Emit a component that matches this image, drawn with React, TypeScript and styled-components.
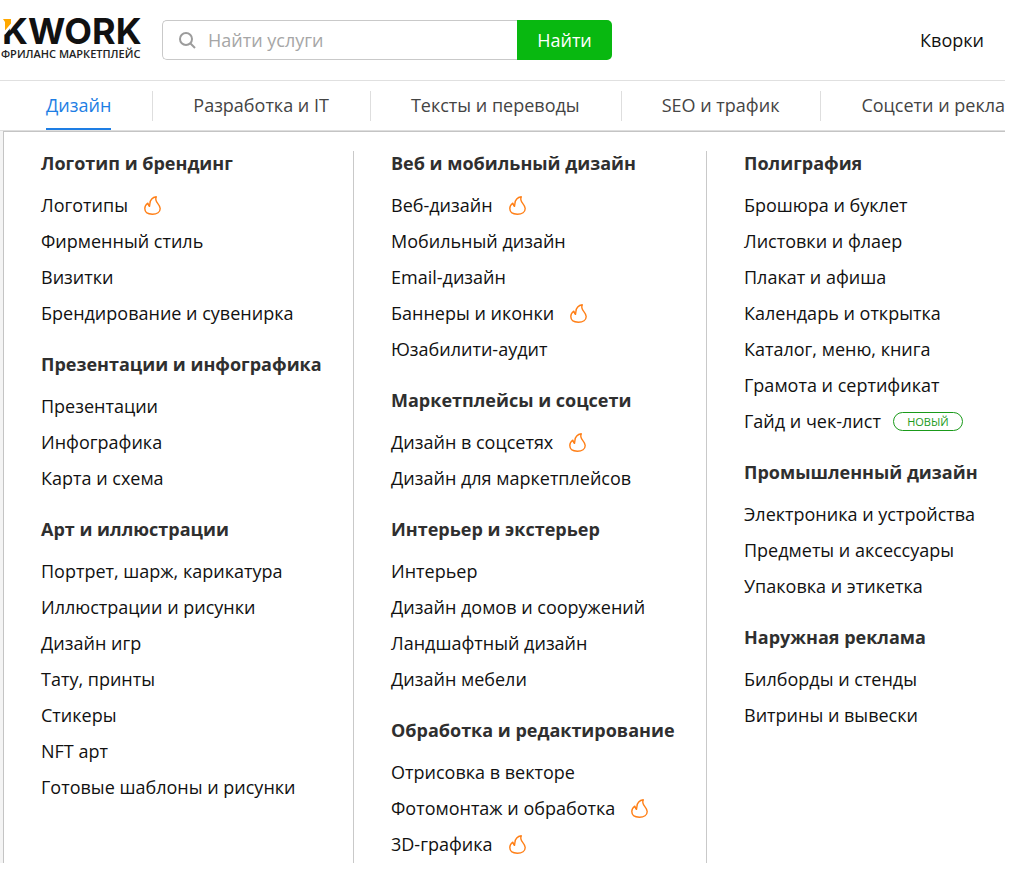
import React from "react";
import styled, { createGlobalStyle } from "styled-components";

const GlobalStyle = createGlobalStyle`
  *, *::before, *::after { box-sizing: border-box; }
  body {
    margin: 0;
    background: #fff;
    color: #111;
    font: 18px/24px "Open Sans", "Noto Sans", sans-serif;
  }
  a { color: inherit; text-decoration: none; }
  ul { list-style: none; margin: 0; padding: 0; }
`;

const Page = styled.div`
  margin-right: 5px;
  overflow: hidden;
`;

const Header = styled.header`
  display: flex;
  align-items: center;
  height: 81px;
  padding-right: 21px;
  border-bottom: 1px solid #e0e0e0;
`;

const LogoLink = styled.a`
  display: block;
  width: 162px;
  flex: none;
`;

const Wordmark = styled.svg`
  display: block;
  overflow: visible;
`;

const Tagline = styled.span`
  display: block;
  padding-left: 1px;
  font-size: 11px;
  font-weight: 600;
  line-height: 18px;
  white-space: nowrap;
  color: #222;
`;

const SearchForm = styled.form`
  display: flex;
  width: 450px;
  height: 40px;
`;

const SearchField = styled.label`
  display: flex;
  flex: 1;
  align-items: center;
  gap: 12px;
  min-width: 0;
  padding-left: 16px;
  border: 1px solid #c9c9c9;
  border-right: 0;
  border-radius: 5px 0 0 5px;
`;

const SearchInput = styled.input`
  flex: 1;
  min-width: 0;
  padding: 0;
  border: 0;
  outline: 0;
  background: none;
  font: inherit;
  &::placeholder { color: #a6a6a6; opacity: 1; }
`;

const SearchButton = styled.button`
  width: 95px;
  border: 0;
  border-radius: 0 5px 5px 0;
  background: #08b810;
  color: #fff;
  font: inherit;
  cursor: pointer;
`;

const HeaderLink = styled.a`
  margin-left: auto;
`;

const Tabs = styled.nav`
  display: flex;
  align-items: center;
  height: 50px;
  padding-left: 6px;
  border-bottom: 1px solid #dedede;
`;

const TabCell = styled.div`
  flex: none;
  height: 30px;
  padding: 0 41px 0 40px;
  border-right: 1px solid #dedede;
`;

const Tab = styled.a<{ $active?: boolean }>`
  display: block;
  height: 39px;
  line-height: 28px;
  white-space: nowrap;
  color: ${(p) => (p.$active ? "#1e7ee4" : "#444")};
  border-bottom: ${(p) => (p.$active ? "2px solid #1e7ee4" : "0")};
`;

const Backdrop = styled.div`
  padding-left: 3px;
  background: #f4f4f4;
`;

const Menu = styled.main`
  display: grid;
  grid-template-columns: 350fr 353fr 298fr;
  padding-top: 19px;
  border-top: 1px solid #c4c4c4;
  border-left: 1px solid #c4c4c4;
  background: #fff;
`;

const Column = styled.div`
  display: flex;
  flex-direction: column;
  gap: 21px;
  min-width: 0;
  padding: 0 0 1px 37px;
  border-right: 1px solid #c9c9c9;
  &:last-child { border-right: 0; }
`;

const GroupTitle = styled.h2`
  margin: 0 0 12px;
  font-size: 18px;
  font-weight: 700;
  line-height: 24px;
  white-space: nowrap;
  color: #2f2f2f;
`;

const Item = styled.li`
  display: flex;
  align-items: center;
  height: 36px;
  white-space: nowrap;
`;

const Flame = styled.svg`
  flex: none;
  margin-left: 16px;
`;

const NewBadge = styled.span`
  width: 70px;
  height: 19px;
  margin-left: 12px;
  border: 1px solid #1a9a1a;
  border-radius: 10px;
  color: #1a9a1a;
  font-size: 11px;
  line-height: 17px;
  text-align: center;
`;

type Entry = { name: string; hot?: boolean; fresh?: boolean };
type Group = { title: string; items: Entry[] };

const list = (...names: string[]): Entry[] =>
  names.map((n) => ({
    name: n.replace(/[*+]$/, ""),
    hot: n.endsWith("*"),
    fresh: n.endsWith("+"),
  }));

const columns: Group[][] = [
  [
    { title: "Логотип и брендинг", items: list("Логотипы*", "Фирменный стиль", "Визитки", "Брендирование и сувенирка") },
    { title: "Презентации и инфографика", items: list("Презентации", "Инфографика", "Карта и схема") },
    {
      title: "Арт и иллюстрации",
      items: list("Портрет, шарж, карикатура", "Иллюстрации и рисунки", "Дизайн игр", "Тату, принты", "Стикеры", "NFT арт", "Готовые шаблоны и рисунки"),
    },
  ],
  [
    { title: "Веб и мобильный дизайн", items: list("Веб-дизайн*", "Мобильный дизайн", "Email-дизайн", "Баннеры и иконки*", "Юзабилити-аудит") },
    { title: "Маркетплейсы и соцсети", items: list("Дизайн в соцсетях*", "Дизайн для маркетплейсов") },
    { title: "Интерьер и экстерьер", items: list("Интерьер", "Дизайн домов и сооружений", "Ландшафтный дизайн", "Дизайн мебели") },
    { title: "Обработка и редактирование", items: list("Отрисовка в векторе", "Фотомонтаж и обработка*", "3D-графика*") },
  ],
  [
    {
      title: "Полиграфия",
      items: list("Брошюра и буклет", "Листовки и флаер", "Плакат и афиша", "Календарь и открытка", "Каталог, меню, книга", "Грамота и сертификат", "Гайд и чек-лист+"),
    },
    { title: "Промышленный дизайн", items: list("Электроника и устройства", "Предметы и аксессуары", "Упаковка и этикетка") },
    { title: "Наружная реклама", items: list("Билборды и стенды", "Витрины и вывески") },
  ],
];

const tabs = ["Дизайн", "Разработка и IT", "Тексты и переводы", "SEO и трафик", "Соцсети и реклама"];

// Flame marking the popular categories
const FlameIcon = () => (
  <Flame width="17" height="20" viewBox="0 -1 17 20" fill="none" stroke="#ff7f16" strokeWidth="1.4" strokeLinejoin="round" strokeLinecap="round" aria-hidden="true">
    <path d="M12.3 .8C8.6 1.4 6.2 4 5.9 7.6L5.5 10.4C4.6 9.8 4.2 8.6 3.9 7.2C1.8 8.6 .8 10.4 .8 12.6C.8 16.2 4 18.2 8.4 18.2C13 18.2 16.2 16 16.2 12.4C16.2 8 9.6 5.6 12.3 .8Z" />
  </Flame>
);

export default function App() {
  return (
    <>
      <GlobalStyle />
      <Page>
        <Header>
          <LogoLink href="#">
            <Wordmark width="141" height="28" viewBox="0 0 141 28" role="img" aria-label="Kwork">
              <text x="2" y="27" fontFamily="Inter, sans-serif" fontSize="36" fontWeight="700" fill="#111">KWORK</text>
              <path d="M2 0H12V9L5 17.5H2Z" fill="#fff" />
              <path d="M3 2H11V6.5L5 13.5V5Z" fill="#ffa800" />
            </Wordmark>
            <Tagline>ФРИЛАНС МАРКЕТПЛЕЙС</Tagline>
          </LogoLink>
          <SearchForm onSubmit={(e) => e.preventDefault()}>
            <SearchField>
              <svg width="17" height="17" viewBox="0 0 17 17" fill="none" stroke="#9c9c9c" strokeWidth="2" aria-hidden="true">
                <circle cx="7" cy="7" r="6" />
                <path d="M11.5 11.5L16 16" />
              </svg>
              <SearchInput type="text" placeholder="Найти услуги" aria-label="Найти услуги" />
            </SearchField>
            <SearchButton type="submit">Найти</SearchButton>
          </SearchForm>
          <HeaderLink href="#">Кворки</HeaderLink>
        </Header>
        <Tabs>
          {tabs.map((t, i) => (
            <TabCell key={t}>
              <Tab href="#" $active={i === 0}>{t}</Tab>
            </TabCell>
          ))}
        </Tabs>
        <Backdrop>
          <Menu>
            {columns.map((groups, i) => (
              <Column key={i}>
                {groups.map((g) => (
                  <section key={g.title}>
                    <GroupTitle>{g.title}</GroupTitle>
                    <ul>
                      {g.items.map((it) => (
                        <Item key={it.name}>
                          <a href="#">{it.name}</a>
                          {it.hot && <FlameIcon />}
                          {it.fresh && <NewBadge>НОВЫЙ</NewBadge>}
                        </Item>
                      ))}
                    </ul>
                  </section>
                ))}
              </Column>
            ))}
          </Menu>
        </Backdrop>
      </Page>
    </>
  );
}
